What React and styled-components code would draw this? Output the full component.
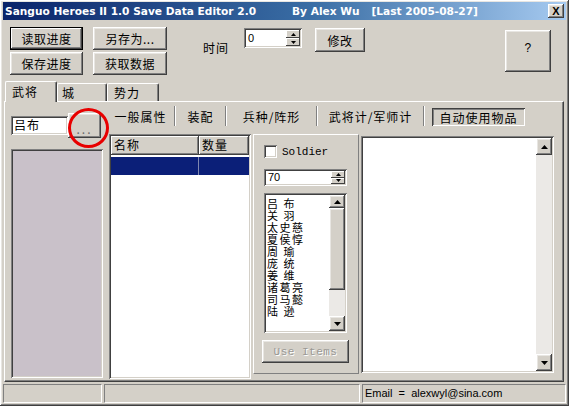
import React from "react";
import styled, { createGlobalStyle, css } from "styled-components";

const GlobalStyle = createGlobalStyle`
  html, body {
    margin: 0;
    padding: 0;
    background: #ffffff;
  }
  body {
    font-family: "Noto Sans CJK SC", "Liberation Sans", sans-serif;
    font-size: 12px;
    color: #000;
  }
  * {
    box-sizing: border-box;
  }
`;

const FACE = "#d4d0c8";

const raised = css`
  box-shadow: inset -1px -1px #404040, inset 1px 1px #ffffff,
    inset -2px -2px #808080, inset 2px 2px #e8e6e2;
`;

const sunken = css`
  box-shadow: inset 1px 1px #808080, inset -1px -1px #ffffff,
    inset 2px 2px #404040, inset -2px -2px ${FACE};
`;

const Window = styled.div`
  width: 569px;
  height: 406px;
  background: ${FACE};
  padding: 2px 3px;
  display: flex;
  flex-direction: column;
  ${raised};
`;

const TitleBar = styled.div`
  height: 18px;
  display: flex;
  align-items: center;
  padding-left: 2px;
  background: linear-gradient(to right, #0a246a 0%, #3a6ea5 55%, #a6caf0 100%);
  color: #fff;
  font-family: "DejaVu Sans", "Liberation Sans", sans-serif;
  font-weight: bold;
  font-size: 10.6px;
  white-space: pre;
`;

const TitlePart = styled.span`
  margin-left: ${(p) => p.$gap || 0}px;
`;

const CloseButton = styled.div`
  margin-left: auto;
  margin-right: 2px;
  width: 16px;
  height: 14px;
  background: ${FACE};
  color: #000;
  display: flex;
  align-items: center;
  justify-content: center;
  font-family: "Liberation Sans", sans-serif;
  font-size: 11px;
  font-weight: bold;
  ${raised};
`;

const Toolbar = styled.div`
  height: 61px;
  display: flex;
  align-items: flex-start;
  padding: 7px 11px 0 7px;
`;

const ButtonGrid = styled.div`
  display: grid;
  grid-template-columns: 73px 74px;
  grid-auto-rows: 23px;
  column-gap: 10px;
  row-gap: 2px;
`;

const Button = styled.div`
  width: ${(p) => (p.$w ? `${p.$w}px` : "auto")};
  height: ${(p) => (p.$h ? `${p.$h}px` : "auto")};
  margin-top: ${(p) => p.$top || 0}px;
  margin-left: ${(p) => p.$left || 0}px;
  display: flex;
  align-items: center;
  justify-content: center;
  background: ${FACE};
  font-size: 12px;
  letter-spacing: 0.5px;
  ${raised};
  ${(p) =>
    p.$default &&
    css`
      box-shadow: inset 1px 1px #000, inset -1px -1px #000,
        inset -2px -2px #404040, inset 2px 2px #ffffff,
        inset -3px -3px #808080;
    `}
  ${(p) =>
    p.$disabled &&
    css`
      color: #9a9894;
      text-shadow: 1px 1px #ffffff;
      font-family: "Liberation Mono", monospace;
      font-size: 11px;
    `}
`;

const HelpMark = styled.span`
  margin-top: -6px;
  font-family: "Liberation Sans", sans-serif;
  font-size: 12px;
`;

const Label = styled.span`
  margin-left: ${(p) => p.$left || 0}px;
  margin-top: ${(p) => p.$top || 0}px;
  font-size: 12px;
  letter-spacing: 1px;
`;

const SpinField = styled.div`
  width: ${(p) => p.$w}px;
  height: ${(p) => p.$h}px;
  margin-top: ${(p) => p.$top || 0}px;
  margin-left: ${(p) => p.$left || 0}px;
  background: #fff;
  display: flex;
  padding: 2px;
  ${sunken};
`;

const SpinValue = styled.span`
  flex: 1;
  padding-left: 2px;
  font-family: "Liberation Sans", sans-serif;
  font-size: 11px;
  line-height: ${(p) => p.$lh}px;
`;

const SpinButtons = styled.div`
  width: 14px;
  display: flex;
  flex-direction: column;
`;

const SpinHalf = styled.div`
  flex: 1;
  background: ${FACE};
  display: flex;
  align-items: center;
  justify-content: center;
  box-shadow: inset -1px -1px #404040, inset 1px 1px #ffffff;
`;

const Arrow = ({ dir = "up", w = 7 }) => {
  const h = Math.ceil(w / 2);
  const pts =
    dir === "up" ? `${w / 2},0 ${w},${h} 0,${h}` : `0,0 ${w},0 ${w / 2},${h}`;
  return (
    <svg width={w} height={h} viewBox={`0 0 ${w} ${h}`}>
      <polygon points={pts} fill="#000" />
    </svg>
  );
};

const TabStrip = styled.div`
  height: 20px;
  display: flex;
  align-items: flex-end;
  padding-left: 2px;
  position: relative;
  z-index: 1;
`;

const Tab = styled.div`
  width: ${(p) => p.$w}px;
  height: ${(p) => (p.$active ? 21 : 18)}px;
  margin-bottom: ${(p) => (p.$active ? -1 : 0)}px;
  padding-left: ${(p) => p.$pad}px;
  padding-top: ${(p) => (p.$active ? 2 : 1)}px;
  background: ${FACE};
  border-top: 1px solid #fff;
  border-left: 1px solid #fff;
  border-right: 1px solid #404040;
  border-radius: 2px 2px 0 0;
  box-shadow: inset -1px 0 #808080;
  font-size: 12px;
  letter-spacing: 1px;
  line-height: 16px;
`;

const TabPanel = styled.div`
  height: 281px;
  margin: 0 2px 0 1px;
  padding: 4px 2px 0 6px;
  display: flex;
  align-items: flex-start;
  gap: 4px;
  border-top: 1px solid #fff;
  border-left: 1px solid #fff;
  border-right: 1px solid #404040;
  border-bottom: 1px solid #404040;
  box-shadow: inset -1px -1px #808080;
`;

const LeftColumn = styled.div`
  width: 92px;
  margin-top: 7px;
  display: flex;
  flex-direction: column;
  gap: 11px;
`;

const NameRow = styled.div`
  position: relative;
  height: 25px;
  display: flex;
  align-items: center;
`;

const NameEdit = styled.div`
  width: 57px;
  height: 19px;
  background: #fff;
  padding: 1px 0 0 3px;
  font-size: 12px;
  letter-spacing: 1px;
  line-height: 16px;
  ${sunken};
`;

const DotsButton = styled(Button)`
  width: 33px;
  height: 25px;
  color: #6a6a6a;
  letter-spacing: 2px;
  padding-top: 6px;
`;

const RedCircle = styled.div`
  position: absolute;
  left: 57px;
  top: -5px;
  width: 41px;
  height: 40px;
  border: 3px solid #e80000;
  border-radius: 50%;
`;

const HeroList = styled.div`
  height: 229px;
  background: #c9c1c9;
  ${sunken};
`;

const RightArea = styled.div`
  flex: 1;
  display: flex;
  flex-direction: column;
  gap: 6px;
`;

const SubTabs = styled.div`
  height: 22px;
  display: flex;
  align-items: stretch;
`;

const SubTab = styled.div`
  width: ${(p) => p.$w}px;
  display: flex;
  align-items: center;
  justify-content: center;
  font-size: 12px;
  letter-spacing: 1px;
  border-right: 1px solid #808080;
  box-shadow: 1px 0 #ffffff;
  margin: 0 1px 2px 0;
`;

const ActiveSubTab = styled.div`
  width: 93px;
  height: 18px;
  margin: 2px 0 0 7px;
  display: flex;
  align-items: center;
  justify-content: center;
  font-size: 12px;
  letter-spacing: 1px;
  box-shadow: inset 1px 1px #404040, inset -1px -1px #ffffff,
    inset 2px 2px #808080;
`;

const ContentRow = styled.div`
  display: flex;
  align-items: flex-start;
  gap: 2px;
  padding-left: 2px;
`;

const ListView = styled.div`
  width: 142px;
  height: 245px;
  background: #fff;
  padding: 2px;
  ${sunken};
`;

const HeaderRow = styled.div`
  height: 19px;
  display: flex;
`;

const HeaderCell = styled.div`
  width: ${(p) => p.$w}px;
  height: 19px;
  padding: 0 0 0 3px;
  background: ${FACE};
  font-size: 12px;
  letter-spacing: 1px;
  line-height: 18px;
  box-shadow: inset -1px -1px #404040, inset 1px 1px #ffffff,
    inset -2px -2px #808080;
`;

const SelectedRow = styled.div`
  height: 18px;
  margin-top: 2px;
  display: flex;
  background: #0b1f78;
`;

const SelectedCell = styled.div`
  width: ${(p) => p.$w}px;
  border-right: ${(p) => (p.$divider ? "1px solid #8088b0" : "none")};
`;

const GroupPanel = styled.div`
  width: 106px;
  height: 240px;
  padding: 10px 0 0 10px;
  display: flex;
  flex-direction: column;
  border-top: 1px solid #ffffff;
  border-left: 1px solid #ffffff;
  border-right: 1px solid #808080;
  border-bottom: 1px solid #808080;
`;

const CheckRow = styled.div`
  height: 13px;
  display: flex;
  align-items: center;
  gap: 5px;
  font-family: "Liberation Mono", monospace;
  font-size: 11px;
`;

const CheckBox = styled.div`
  width: 13px;
  height: 13px;
  background: #fff;
  ${sunken};
`;

const ItemList = styled.div`
  width: 83px;
  height: 140px;
  margin-top: 7px;
  background: #fff;
  padding: 2px;
  display: flex;
  ${sunken};
`;

const ItemNames = styled.div`
  flex: 1;
  padding: 2px 0 0 1px;
  font-size: 11px;
  line-height: 12px;
  letter-spacing: 1.5px;
`;

const ItemName = styled.div`
  height: 12px;
  white-space: nowrap;
`;

const ScrollBar = styled.div`
  width: ${(p) => p.$w}px;
  display: flex;
  flex-direction: column;
`;

const ScrollArrow = styled.div`
  height: ${(p) => p.$h}px;
  background: ${FACE};
  display: flex;
  align-items: center;
  justify-content: center;
  ${raised};
`;

const ScrollThumb = styled.div`
  height: ${(p) => p.$h}px;
  background: ${FACE};
  ${raised};
`;

const ScrollTrack = styled.div`
  flex: 1;
  background-color: #ebe9e6;
  background-image: radial-gradient(#d4d0c8 0.6px, transparent 0.7px);
  background-size: 2px 2px;
`;

const Memo = styled.div`
  width: 193px;
  height: 237px;
  margin-top: 2px;
  background: #fff;
  padding: 2px;
  display: flex;
  justify-content: flex-end;
  ${sunken};
`;

const StatusBar = styled.div`
  height: 19px;
  margin-top: 2px;
  display: flex;
  gap: 2px;
`;

const StatusPanel = styled.div`
  width: ${(p) => (p.$w ? `${p.$w}px` : "auto")};
  flex: ${(p) => (p.$w ? "none" : 1)};
  padding-left: 2px;
  border-top: 1px solid #808080;
  border-left: 1px solid #808080;
  border-bottom: 1px solid #ffffff;
  border-right: 1px solid #ffffff;
  font-family: "Liberation Sans", sans-serif;
  font-size: 11px;
  line-height: 17px;
  white-space: pre;
`;

const heroes = [
  "吕 布",
  "关 羽",
  "太史慈",
  "夏侯惇",
  "周 瑜",
  "庞 统",
  "姜 维",
  "诸葛亮",
  "司马懿",
  "陆 逊",
];

export default function App() {
  return (
    <>
      <GlobalStyle />
      <Window>
        <TitleBar>
          <TitlePart>Sanguo Heroes II 1.0 Save Data Editor 2.0</TitlePart>
          <TitlePart $gap={36}>By Alex Wu</TitlePart>
          <TitlePart $gap={12}>[Last 2005-08-27]</TitlePart>
          <CloseButton>X</CloseButton>
        </TitleBar>

        <Toolbar>
          <ButtonGrid>
            <Button $default>读取进度</Button>
            <Button>另存为...</Button>
            <Button>保存进度</Button>
            <Button>获取数据</Button>
          </ButtonGrid>
          <Label $left={36} $top={12}>
            时间
          </Label>
          <SpinField $w={58} $h={20} $left={15} $top={1}>
            <SpinValue $lh={16}>0</SpinValue>
            <SpinButtons>
              <SpinHalf>
                <Arrow dir="up" w={5} />
              </SpinHalf>
              <SpinHalf>
                <Arrow dir="down" w={5} />
              </SpinHalf>
            </SpinButtons>
          </SpinField>
          <Button $w={50} $h={24} $left={13} $top={1}>
            修改
          </Button>
          <Button $w={46} $h={42} $left={140} $top={3}>
            <HelpMark>?</HelpMark>
          </Button>
        </Toolbar>

        <TabStrip>
          <Tab $w={52} $pad={6} $active>
            武将
          </Tab>
          <Tab $w={50} $pad={4}>
            城
          </Tab>
          <Tab $w={52} $pad={6}>
            势力
          </Tab>
        </TabStrip>

        <TabPanel>
          <LeftColumn>
            <NameRow>
              <NameEdit>吕布</NameEdit>
              <DotsButton>...</DotsButton>
              <RedCircle />
            </NameRow>
            <HeroList />
          </LeftColumn>

          <RightArea>
            <SubTabs>
              <SubTab $w={68}>一般属性</SubTab>
              <SubTab $w={50}>装配</SubTab>
              <SubTab $w={90}>兵种/阵形</SubTab>
              <SubTab $w={106}>武将计/军师计</SubTab>
              <ActiveSubTab>自动使用物品</ActiveSubTab>
            </SubTabs>

            <ContentRow>
              <ListView>
                <HeaderRow>
                  <HeaderCell $w={88}>名称</HeaderCell>
                  <HeaderCell $w={50}>数量</HeaderCell>
                </HeaderRow>
                <SelectedRow>
                  <SelectedCell $w={88} $divider />
                  <SelectedCell $w={50} />
                </SelectedRow>
              </ListView>

              <GroupPanel>
                <CheckRow>
                  <CheckBox />
                  Soldier
                </CheckRow>
                <SpinField $w={83} $h={17} $top={11}>
                  <SpinValue $lh={13}>70</SpinValue>
                  <SpinButtons>
                    <SpinHalf>
                      <Arrow dir="up" w={5} />
                    </SpinHalf>
                    <SpinHalf>
                      <Arrow dir="down" w={5} />
                    </SpinHalf>
                  </SpinButtons>
                </SpinField>
                <ItemList>
                  <ItemNames>
                    {heroes.map((h) => (
                      <ItemName key={h}>{h}</ItemName>
                    ))}
                  </ItemNames>
                  <ScrollBar $w={16}>
                    <ScrollArrow $h={13}>
                      <Arrow dir="up" w={7} />
                    </ScrollArrow>
                    <ScrollThumb $h={82} />
                    <ScrollTrack />
                    <ScrollArrow $h={15}>
                      <Arrow dir="down" w={7} />
                    </ScrollArrow>
                  </ScrollBar>
                </ItemList>
                <Button $w={87} $h={23} $top={7} $left={-2} $disabled>
                  Use Items
                </Button>
              </GroupPanel>

              <Memo>
                <ScrollBar $w={16}>
                  <ScrollArrow $h={17}>
                    <Arrow dir="up" w={7} />
                  </ScrollArrow>
                  <ScrollTrack />
                  <ScrollArrow $h={17}>
                    <Arrow dir="down" w={7} />
                  </ScrollArrow>
                </ScrollBar>
              </Memo>
            </ContentRow>
          </RightArea>
        </TabPanel>

        <StatusBar>
          <StatusPanel $w={99} />
          <StatusPanel $w={256} />
          <StatusPanel>{"Email  =  alexwyl@sina.com"}</StatusPanel>
        </StatusBar>
      </Window>
    </>
  );
}
